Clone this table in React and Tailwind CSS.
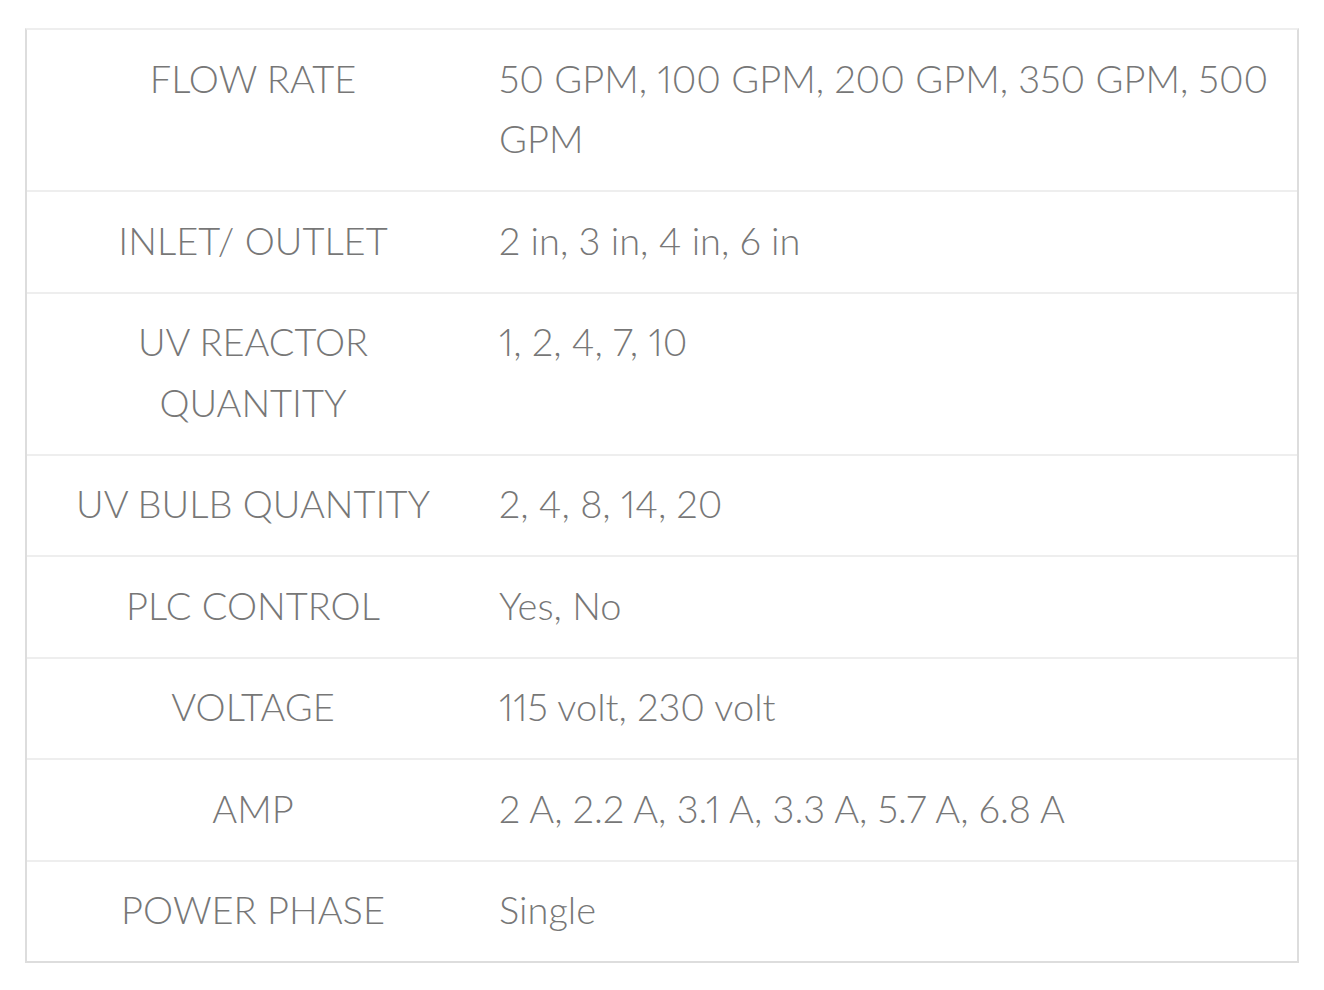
const specs = [
  { label: 'FLOW RATE', value: '50 GPM, 100 GPM, 200 GPM, 350 GPM, 500 GPM' },
  { label: 'INLET/ OUTLET', value: '2 in, 3 in, 4 in, 6 in' },
  { label: 'UV REACTOR QUANTITY', value: '1, 2, 4, 7, 10' },
  { label: 'UV BULB QUANTITY', value: '2, 4, 8, 14, 20' },
  { label: 'PLC CONTROL', value: 'Yes, No' },
  { label: 'VOLTAGE', value: '115 volt, 230 volt' },
  { label: 'AMP', value: '2 A, 2.2 A, 3.1 A, 3.3 A, 5.7 A, 6.8 A' },
  { label: 'POWER PHASE', value: 'Single' },
];

export default function App() {
  return (
    <div className="min-h-[990px] bg-white pt-[28px] pl-[25px] font-['Lato',sans-serif] font-light text-[38px] leading-[60.5px] text-[#777] proportional-nums">
      <div className="w-[1274px] border-2 border-x-[#ddd] border-b-[#ddd] border-t-[#eee]">
        {specs.map((row, i) => (
          <div
            key={row.label}
            className={`grid grid-cols-[452px_1fr] ${i < specs.length - 1 ? 'border-b-2 border-[#eee]' : ''}`}
          >
            <div className="px-5 pt-[17.5px] pb-[21.5px] text-center">{row.label}</div>
            <div className="px-5 pt-[17.5px] pb-[21.5px]">{row.value}</div>
          </div>
        ))}
      </div>
    </div>
  );
}
